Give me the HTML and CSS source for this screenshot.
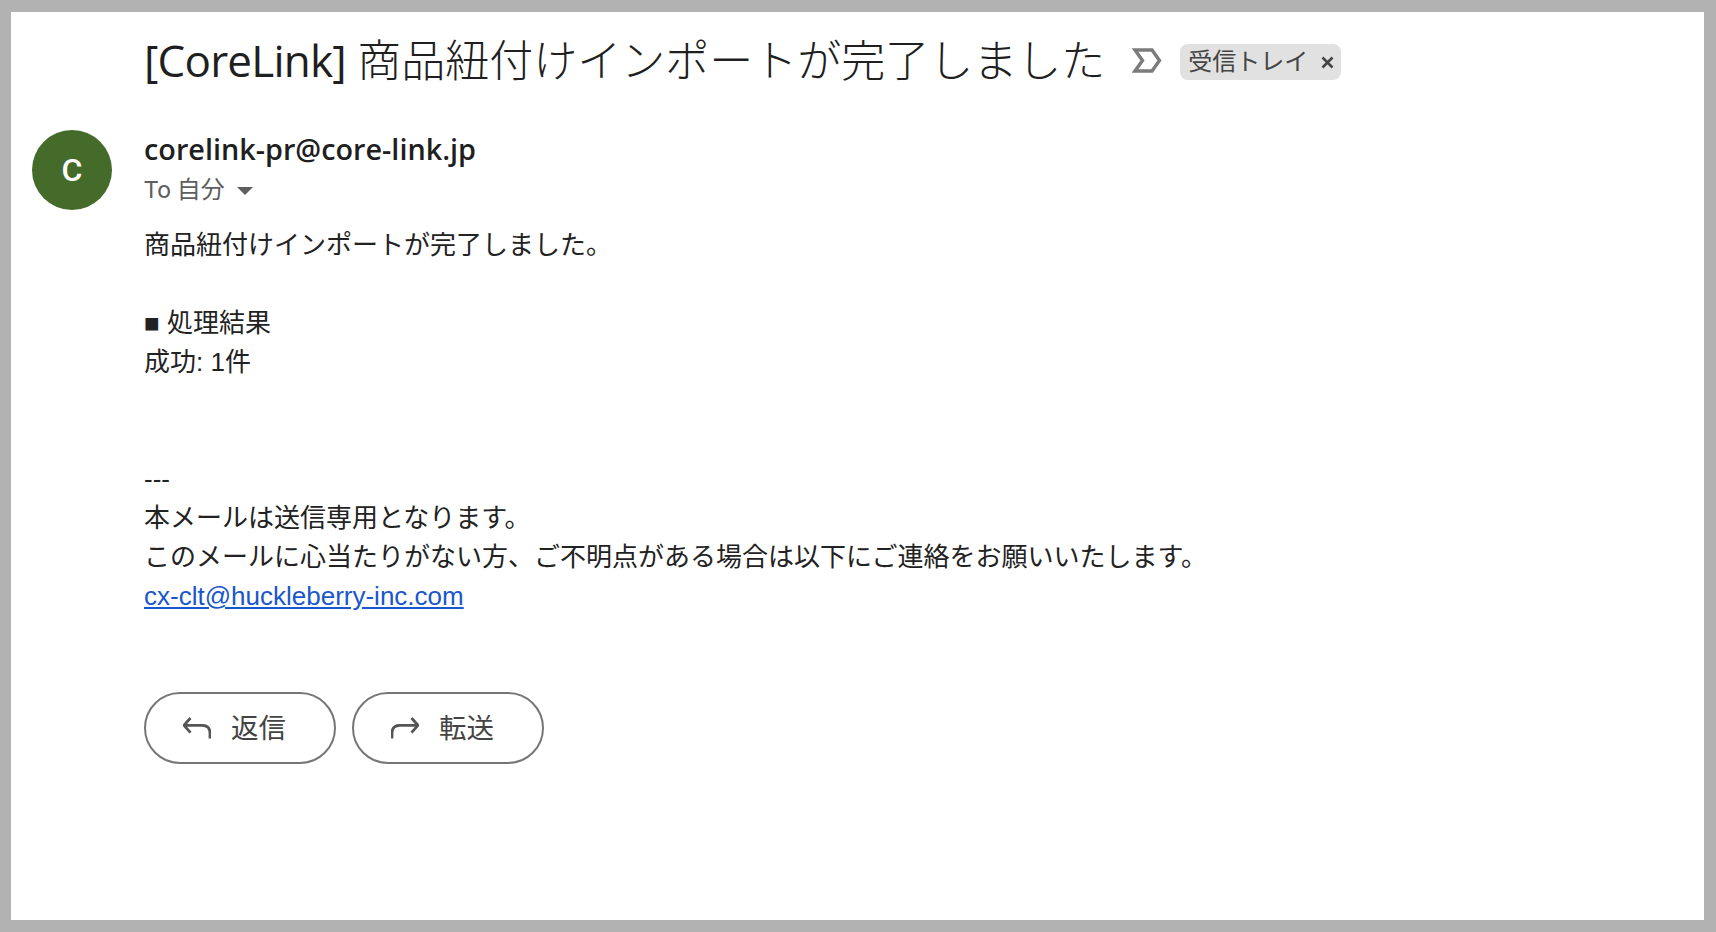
FILE: index.html
```html
<!DOCTYPE html>
<html lang="ja">
<head>
  <meta charset="UTF-8">
  <title>[CoreLink] 商品紐付けインポートが完了しました</title>
  <link rel="stylesheet" href="styles.css">
</head>
<body>
  <div class="mail">
    <div class="subject-row">
      <h1 class="subject"><span class="subject-tag">[CoreLink]</span> 商品紐付けインポートが完了しました</h1>
      <svg class="marker" width="30" height="25" viewBox="0 0 30 25">
        <path d="M3 2 H20 L27.5 12.5 L20 23 H3 L10.5 12.5 Z" fill="none" stroke="#7b7b7b" stroke-width="3.4"/>
      </svg>
      <span class="chip"><span class="chip-label">受信トレイ</span>
        <svg width="13" height="13" viewBox="0 0 13 13"><path d="M1.5 1.5 L11.5 11.5 M11.5 1.5 L1.5 11.5" fill="none" stroke="#444" stroke-width="2.6"/></svg>
      </span>
    </div>

    <div class="message">
      <div class="avatar">C</div>
      <div class="content">
        <div class="sender">corelink-pr@core-link.jp</div>
        <div class="to">To 自分 <span class="caret"></span></div>
        <div class="body-text">
          <div>商品紐付けインポートが完了しました。</div>
          <div class="blank"></div>
          <div>■ 処理結果</div>
          <div>成功: 1件</div>
          <div class="blank"></div>
          <div class="blank"></div>
          <div>---</div>
          <div>本メールは送信専用となります。</div>
          <div>このメールに心当たりがない方、ご不明点がある場合は以下にご連絡をお願いいたします。</div>
          <div><a href="#">cx-clt@huckleberry-inc.com</a></div>
        </div>
        <div class="actions">
          <button class="action">
            <svg class="action-icon" width="28" height="22" viewBox="0 0 28 22"><path d="M7.5 1 L1 8.3 L7.5 15.7 M1 8.3 H19 Q27 8.3 27 16 V21.5" fill="none" stroke="#555" stroke-width="2.8"/></svg>
            返信
          </button>
          <button class="action">
            <svg class="action-icon" width="28" height="22" viewBox="0 0 28 22"><path d="M20.5 1 L27 8.3 L20.5 15.7 M27 8.3 H9 Q1 8.3 1 16 V21.5" fill="none" stroke="#555" stroke-width="2.8"/></svg>
            転送
          </button>
        </div>
      </div>
    </div>
  </div>
</body>
</html>
```

FILE: styles.css
```css
html, body {
  height: 100%;
}

body {
  margin: 0;
  padding: 12px 12px 12px 11px;
  box-sizing: border-box;
  background: #b2b2b2;
  font-family: "Liberation Sans", "Noto Sans CJK JP", sans-serif;
  color: #222;
}

.mail {
  height: 100%;
  background: #fff;
  padding: 0 21px;
  overflow: hidden;
}

.subject-row {
  display: flex;
  align-items: center;
  height: 96px;
  padding-left: 112px;
}

.subject {
  margin: 0 0 4px;
  font-family: "Open Sans", "Noto Sans CJK JP", sans-serif;
  font-size: 44px;
  font-weight: 300;
  color: #1f1f1f;
  white-space: nowrap;
}

.subject-tag {
  font-weight: 400;
  letter-spacing: -0.8px;
}

.marker {
  margin-left: 27px;
}

.chip {
  margin: 4px 0 0 18px;
  display: flex;
  align-items: center;
  gap: 13px;
  width: 161px;
  height: 36px;
  padding-left: 8px;
  box-sizing: border-box;
  border-radius: 8px;
  background: #e1e1e1;
  font-size: 24px;
  color: #444;
}

.chip-label {
  margin-bottom: 6px;
}

.message {
  display: flex;
  gap: 32px;
  margin-top: 22px;
}

.avatar {
  flex: none;
  width: 80px;
  height: 80px;
  border-radius: 50%;
  background: #456b2b;
  color: #fff;
  font-family: Roboto, sans-serif;
  font-size: 32px;
  font-weight: 500;
  display: flex;
  align-items: center;
  justify-content: center;
}

.sender {
  font-family: "Open Sans", sans-serif;
  font-size: 28.8px;
  font-weight: 600;
  color: #1f1f1f;
  line-height: 38px;
}

.to {
  margin-top: 4px;
  font-family: Roboto, "Noto Sans CJK JP", sans-serif;
  font-size: 24px;
  line-height: 36px;
  color: #5e5e5e;
}

.caret {
  display: inline-block;
  margin-left: 6px;
  margin-bottom: 2px;
  vertical-align: middle;
  border-left: 8px solid transparent;
  border-right: 8px solid transparent;
  border-top: 8px solid #5e5e5e;
}

.body-text {
  margin-top: 18px;
  font-size: 26px;
  line-height: 39px;
  white-space: nowrap;
}

.blank {
  height: 39px;
}

.body-text a {
  color: #1a56cc;
}

.actions {
  display: flex;
  gap: 16px;
  margin-top: 76px;
}

.action {
  display: flex;
  align-items: center;
  justify-content: flex-start;
  gap: 20px;
  width: 192px;
  height: 72px;
  padding: 0 0 5px 37px;
  background: #fff;
  border: 2px solid #747775;
  border-radius: 36px;
  font-family: Roboto, "Noto Sans CJK JP", sans-serif;
  font-size: 27.5px;
  color: #444;
}

.action-icon {
  margin-top: 5px;
}
```
